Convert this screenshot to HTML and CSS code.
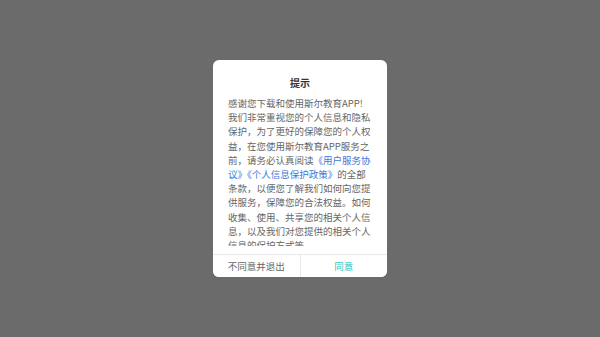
FILE: index.html
```html
<!DOCTYPE html>
<html lang="zh-CN">
<head>
    <meta charset="UTF-8">
    <meta name="viewport" content="width=device-width, initial-scale=1.0">
    <title>提示</title>
    <link rel="stylesheet" href="styles.css">
</head>
<body>
    <div class="mask">
        <div class="dialog">
            <div class="title">提示</div>
            <div class="content">
                感谢您下载和使用斯尔教育APP!我们非常重视您的个人信息和隐私保护，为了更好的保障您的个人权益，在您使用斯尔教育APP服务之前，请务必认真阅读<a href="#">《用户服务协议》</a><a href="#">《个人信息保护政策》</a>的全部条款，以便您了解我们如何向您提供服务，保障您的合法权益。如何收集、使用、共享您的相关个人信息，以及我们对您提供的相关个人信息的保护方式等。
            </div>
            <div class="footer">
                <button class="btn">不同意并退出</button>
                <button class="btn agree">同意</button>
            </div>
        </div>
    </div>
</body>
</html>
```

FILE: styles.css
```css
body {
    margin: 0;
    font-family: "Noto Sans CJK SC", "Noto Sans", sans-serif;
}
.mask {
    display: flex;
    justify-content: center;
    align-items: center;
    height: 100vh;
    background-color: #6b6b6b;
}
.dialog {
    width: 174px;
    background: #fff;
    border-radius: 6px;
    overflow: hidden;
}
.title {
    padding-top: 16px;
    font-size: 10px;
    line-height: 14px;
    font-weight: bold;
    text-align: center;
    color: #333;
}
.content {
    height: 150px;
    margin: 6px 15px 8px;
    overflow: hidden;
    font-size: 9.5px;
    line-height: 14.2px;
    color: #666;
}
.content a {
    color: #3b7ad9;
    text-decoration: none;
}
.footer {
    display: flex;
    border-top: 1px solid #e8e8e8;
}
.btn {
    flex: 1;
    height: 22px;
    padding: 0;
    border: none;
    background: #fff;
    font-family: inherit;
    font-size: 9.5px;
    color: #666;
}
.btn + .btn {
    border-left: 1px solid #e8e8e8;
}
.agree {
    color: #2fc4bd;
}
```
